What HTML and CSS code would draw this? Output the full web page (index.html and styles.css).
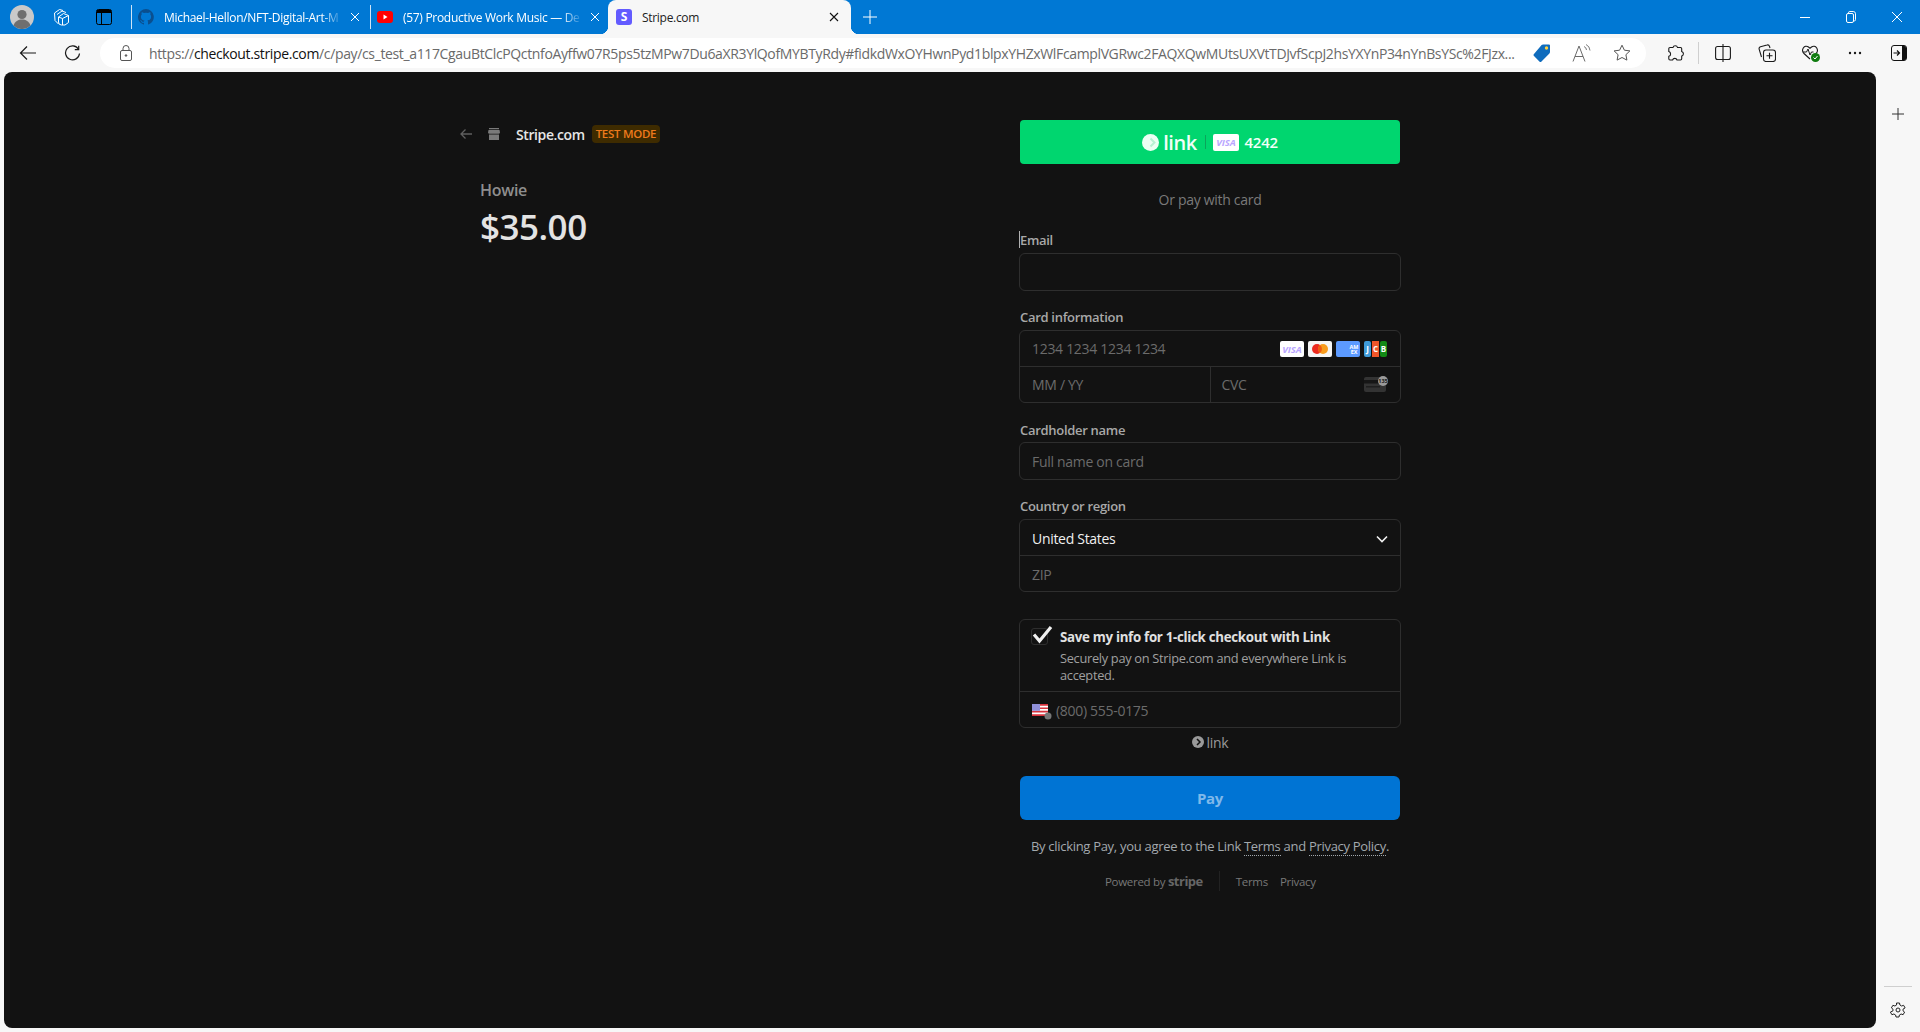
FILE: index.html
```html
<!DOCTYPE html>
<html lang="en">
<head>
<meta charset="utf-8">
<title>Stripe.com</title>
<link rel="stylesheet" href="styles.css">
</head>
<body>
<header class="titlebar">
  <div class="avatar">
    <svg width="24" height="24" viewBox="0 0 24 24"><circle cx="12" cy="12" r="12" fill="#c9c9c9"/><circle cx="12" cy="9.500" r="4.600" fill="#6f6f6f"/><path d="M3.500 20.500c1.400-4.300 4.800-6 8.500-6s7.100 1.700 8.500 6A12 12 0 0 1 3.500 20.500z" fill="#6f6f6f"/></svg>
  </div>
  <div class="tb-btn w40">
    <svg width="18" height="18" viewBox="0 0 18 18" fill="none" stroke="#fff" stroke-width="1"><path d="M1.500 5 6.500 1.500l3.500 1M1.500 5l.5 7.500L5.500 16M4 6.500 9 3l4 1.500"/><path d="M5.500 9 10.500 5.500l5 2v7L12 17H8.500a3 3 0 0 1-3-3z"/><path d="M5.500 9l4 1.500v6.500M9.500 10.500l6-3"/></svg>
  </div>
  <div class="tb-btn w44">
    <svg width="16" height="16" viewBox="0 0 16 16"><rect x="0.500" y="0.500" width="15" height="15" rx="2" fill="#0078d4" stroke="#000"/><path d="M1 1h14v3H1zM5 4h1v11H5z" fill="#000"/></svg>
  </div>
  <div class="tab tab-first">
    <svg class="favicon" viewBox="0 0 16 16"><path fill="#0a4f8f" d="M8 0a8 8 0 0 0-2.500 15.600c.4.100.5-.2.500-.4v-1.400c-2.200.5-2.700-1-2.700-1-.4-.9-.9-1.200-.9-1.200-.7-.5.100-.5.100-.5.800.1 1.200.8 1.200.8.700 1.200 1.900.9 2.300.7.100-.5.300-.9.500-1.100-1.800-.2-3.600-.9-3.600-4 0-.9.300-1.600.8-2.100-.1-.2-.4-1 .1-2.100 0 0 .7-.2 2.200.8a7.600 7.600 0 0 1 4 0c1.500-1 2.200-.8 2.200-.8.400 1.100.2 1.900.1 2.100.5.600.8 1.300.8 2.100 0 3.100-1.900 3.700-3.700 3.900.3.300.6.800.6 1.500v2.200c0 .2.100.5.600.4A8 8 0 0 0 8 0z"/></svg>
    <span class="tab-title fade">Michael-Hellon/NFT-Digital-Art-M</span>
    <svg class="tab-close" viewBox="0 0 12 12" stroke="#fff" stroke-width="1"><path d="M2 2l8 8M10 2l-8 8"/></svg>
  </div>
  <div class="tab tab-second">
    <svg class="favicon" viewBox="0 0 16 16"><rect y="2" width="16" height="12" rx="3" fill="#f00"/><path d="M6.500 5.500v5l4-2.500z" fill="#fff"/></svg>
    <span class="tab-title fade">(57) Productive Work Music — De</span>
    <svg class="tab-close" viewBox="0 0 12 12" stroke="#fff" stroke-width="1"><path d="M2 2l8 8M10 2l-8 8"/></svg>
  </div>
  <div class="tab tab-active">
    <span class="stripe-fav">S</span>
    <span class="tab-title">Stripe.com</span>
    <svg class="tab-close" viewBox="0 0 12 12" stroke="#111" stroke-width="1.100"><path d="M2 2l8 8M10 2l-8 8"/></svg>
  </div>
  <div class="new-tab">
    <svg width="14" height="14" viewBox="0 0 14 14" stroke="#fff" stroke-width="1"><path d="M7 0v14M0 7h14"/></svg>
  </div>
  <div class="window-controls">
    <svg width="46" height="12" viewBox="0 0 46 12" stroke="#fff" stroke-width="1" fill="none"><path d="M18 6.500h10"/></svg>
    <svg width="46" height="12" viewBox="0 0 46 12" stroke="#fff" stroke-width="1" fill="none"><rect x="18.500" y="2.500" width="7" height="9" rx="1.500"/><path d="M20.500 2.500V1.800a1.300 1.300 0 0 1 1.300-1.300h3.400a2.300 2.300 0 0 1 2.300 2.300v5.900a1.300 1.300 0 0 1-1.300 1.300"/></svg>
    <svg width="46" height="12" viewBox="0 0 46 12" stroke="#fff" stroke-width="1" fill="none"><path d="M18 1l10 10M28 1 18 11"/></svg>
  </div>
</header>

<nav class="toolbar">
  <div class="tool first-tool">
    <svg width="18" height="16" viewBox="0 0 18 16" fill="none" stroke="#1a1a1a" stroke-width="1.200"><path d="M17 8H1.500M8 1.500 1.500 8 8 14.500"/></svg>
  </div>
  <div class="tool">
    <svg width="17" height="17" viewBox="0 0 17 17" fill="none" stroke="#1a1a1a" stroke-width="1.200"><path d="M14.500 4.200A7 7 0 1 0 15.500 8.500"/><path d="M14.700 0.800v3.900h-3.900"/></svg>
  </div>
  <div class="address">
    <svg class="lock" width="12" height="16" viewBox="0 0 12 16" fill="none" stroke="#555" stroke-width="1"><rect x="0.500" y="5.500" width="11" height="10" rx="1.500"/><path d="M3 5.500V3.500a3 3 0 0 1 6 0v2"/><circle cx="6" cy="10.500" r="0.800" fill="#555"/></svg>
    <span class="url">https://<b>checkout.stripe.com</b>/c/pay/cs_test_a117CgauBtClcPQctnfoAyffw07R5ps5tzMPw7Du6aXR3YlQofMYBTyRdy#fidkdWxOYHwnPyd1blpxYHZxWlFcamplVGRwc2FAQXQwMUtsUXVtTDJvfScpJ2hsYXYnP34nYnBsYSc%2FJzx...</span>
    <div class="addr-icon">
      <svg width="18" height="20" viewBox="0 0 18 20"><path d="M10 1.500h6a1 1 0 0 1 1 1v6.500a2 2 0 0 1-.6 1.400L8.500 18.500a1.500 1.500 0 0 1-2.100 0L1 13a1.500 1.500 0 0 1 0-2.100L8.600 2.100A2 2 0 0 1 10 1.500z" fill="#0f6cbd"/><circle cx="13.500" cy="5" r="1.700" fill="#ffd23f"/></svg>
    </div>
    <div class="addr-icon">
      <svg width="20" height="18" viewBox="0 0 20 18" fill="none" stroke="#6a6a6a" stroke-width="1"><path d="M1 17.500 7 2l6 15.500M3 12.500h8"/><path d="M12 2.500a4 4 0 0 1 2.500 3.500M14 0.500a7 7 0 0 1 4 6" stroke-width="0.900"/></svg>
    </div>
    <div class="addr-icon">
      <svg width="18" height="18" viewBox="0 0 18 18" fill="none" stroke="#555" stroke-width="1"><path d="M9 1.200l2.400 5 5.500.7-4 3.800 1 5.400L9 13.500l-4.900 2.600 1-5.400-4-3.800 5.500-.7z"/></svg>
    </div>
  </div>
  <div class="tool">
    <svg width="18" height="18" viewBox="0 0 18 18" fill="none" stroke="#1a1a1a" stroke-width="1.100"><path d="M7 3.500a2.300 2.300 0 0 1 4.500 0h3a1.200 1.200 0 0 1 1.200 1.200v2.800a2.400 2.400 0 0 1 0 4.600v2.700a1.200 1.200 0 0 1-1.200 1.200H11a2.300 2.300 0 0 0-4.400 0H4a1.200 1.200 0 0 1-1.200-1.200v-2.500a2.500 2.500 0 0 0 0-4.800V4.700A1.200 1.200 0 0 1 4 3.500z"/></svg>
  </div>
  <div class="tool-sep"></div>
  <div class="tool">
    <svg width="16" height="18" viewBox="0 0 16 18" fill="none" stroke="#1a1a1a" stroke-width="1.100"><rect x="0.600" y="2.500" width="14.800" height="13" rx="2"/><path d="M8 0v18"/></svg>
  </div>
  <div class="tool">
    <svg width="18" height="18" viewBox="0 0 18 18" fill="none" stroke="#1a1a1a" stroke-width="1.100"><path d="M3.500 13 1.200 5.300a2 2 0 0 1 1.300-2.500L9 1a2 2 0 0 1 2.500 1.300L12 4"/><rect x="5.500" y="6" width="12" height="11.500" rx="2.500" fill="#f7f7f7"/><path d="M11.500 8.800v6M8.500 11.800h6"/></svg>
  </div>
  <div class="tool">
    <svg width="20" height="20" viewBox="0 0 20 20"><path d="M9 16 3 10.500C-.5 7 3.500 1 7.500 4L9 5.200 10.500 4c4-3 8 3 4.500 6.500" fill="none" stroke="#1a1a1a" stroke-width="1.100"/><path d="M2 9h3.500l1.500-3 2 6 1.500-3h2" fill="none" stroke="#1a1a1a" stroke-width="1"/><circle cx="14.500" cy="14.500" r="4.500" fill="#107c10"/><path d="M12.500 14.500l1.500 1.500 2.500-3" fill="none" stroke="#fff" stroke-width="1"/></svg>
  </div>
  <div class="tool">
    <svg width="14" height="4" viewBox="0 0 14 4" fill="#1a1a1a"><circle cx="2" cy="2" r="1.200"/><circle cx="7" cy="2" r="1.200"/><circle cx="12" cy="2" r="1.200"/></svg>
  </div>
  <div class="tool">
    <svg width="16" height="16" viewBox="0 0 16 16"><rect x="0.500" y="0.500" width="15" height="15" rx="2.500" fill="#f7f7f7" stroke="#111"/><path d="M11 1h2.500A1.500 1.500 0 0 1 15 2.500v11a1.500 1.500 0 0 1-1.500 1.500H11z" fill="#111"/><path d="M2.500 8H8M6 5.500 8.500 8 6 10.500" fill="none" stroke="#111" stroke-width="1.200"/></svg>
  </div>
</nav>

<div class="workspace">
  <main class="page">
    <section class="summary">
      <div class="merchant">
        <svg class="back-arrow" width="12" height="12" viewBox="0 0 12 12" fill="none" stroke="#5f5f5f" stroke-width="1.300"><path d="M12 6H1M5.500 1.500 1 6l4.500 4.500"/></svg>
        <svg class="store" width="12" height="12" viewBox="0 0 12 12" fill="#7a7a7a"><path d="M1 0h10v1.300H1zM.5 2h11l.5 2.500a1.500 1.500 0 0 1-1.500 1.300h-9A1.500 1.500 0 0 1 0 4.500zM1 6.500h10V12H1z"/></svg>
        <span class="merchant-name">Stripe.com</span>
        <span class="badge">TEST MODE</span>
      </div>
      <div class="product">Howie</div>
      <div class="price">$35.00</div>
    </section>

    <section class="checkout">
      <div class="link-btn">
        <svg width="17" height="17" viewBox="0 0 17 17"><circle cx="8.500" cy="8.500" r="8.500" fill="#eafff3"/><path d="M8.500 4.500 12.500 8.500l-4 4" fill="none" stroke="#b5f2d2" stroke-width="2"/></svg>
        <span class="link-word">link</span>
        <span class="link-sep"></span>
        <svg class="link-visa" width="26" height="17" viewBox="0 0 26 17"><rect width="26" height="17" rx="2" fill="#fff"/><text x="13" y="12" text-anchor="middle" class="visa-text">VISA</text></svg>
        <span class="link-last4">4242</span>
      </div>
      <div class="or-card">Or pay with card</div>

      <div class="field email-field">
        <label class="label label-wide"><span class="caret"></span>Email</label>
        <div class="box"><div class="row"></div></div>
      </div>

      <div class="field card-field">
        <label class="label label-wide">Card information</label>
        <div class="box">
          <div class="row placeholder card-row">
            <span class="grow">1234 1234 1234 1234</span>
            <span class="card-icons">
              <svg width="24" height="16" viewBox="0 0 24 16"><rect width="24" height="16" rx="2" fill="#fff"/><text x="12" y="11.500" text-anchor="middle" class="visa-text">VISA</text></svg>
              <svg width="24" height="16" viewBox="0 0 24 16"><rect width="24" height="16" rx="2" fill="#f5f5f5"/><circle cx="9" cy="8" r="5" fill="#eb2a1f"/><circle cx="15" cy="8" r="5" fill="#f89c1c"/><path d="M12 4a5 5 0 0 1 0 8 5 5 0 0 1 0-8z" fill="#ee5a14"/></svg>
              <svg width="24" height="16" viewBox="0 0 24 16"><rect width="24" height="16" rx="2" fill="#5c9aff"/><text x="18" y="7.500" text-anchor="middle" class="amex-text">AM</text><text x="18" y="13" text-anchor="middle" class="amex-text">EX</text></svg>
              <svg width="23" height="16" viewBox="0 0 23 16"><rect width="7" height="16" rx="2" fill="#3f9bd9"/><rect x="8" width="7" height="16" fill="#f0562a"/><rect x="16" width="7" height="16" rx="2" fill="#128a15"/><text x="3.500" y="11" text-anchor="middle" class="jcb-text">J</text><text x="11.500" y="11" text-anchor="middle" class="jcb-text">C</text><text x="19.500" y="11" text-anchor="middle" class="jcb-text">B</text></svg>
            </span>
          </div>
          <div class="split">
            <div class="row placeholder half">MM / YY</div>
            <div class="row placeholder half half-right">
              <span class="grow">CVC</span>
              <svg class="cvc-icon" width="24" height="16" viewBox="0 0 24 16"><rect y="1" width="22" height="15" rx="2" fill="#333"/><rect y="4" width="22" height="3.500" fill="#161616"/><rect x="2" y="10" width="14" height="1.500" fill="#1f1f1f"/><circle cx="19" cy="5" r="5" fill="#9a9a9a"/><text x="19" y="7" text-anchor="middle" class="cvc-text">135</text></svg>
            </div>
          </div>
        </div>
      </div>

      <div class="field">
        <label class="label">Cardholder name</label>
        <div class="box"><div class="row placeholder">Full name on card</div></div>
      </div>

      <div class="field country-field">
        <label class="label label-wide">Country or region</label>
        <div class="box">
          <div class="row select">
            <span class="grow">United States</span>
            <svg width="12" height="8" viewBox="0 0 12 8" fill="none" stroke="#f0f0f0" stroke-width="1.600"><path d="M1 1.500 6 6.500l5-5"/></svg>
          </div>
          <div class="row placeholder row-line">ZIP</div>
        </div>
      </div>

      <div class="box save-box">
        <div class="save-top">
          <span class="check">
            <svg width="22" height="20" viewBox="0 0 22 20" fill="none" stroke="#f0f0f0" stroke-width="3.200"><path d="M3 10.500 8.500 17 20 3"/></svg>
          </span>
          <div class="save-copy">
            <div class="save-title">Save my info for 1-click checkout with Link</div>
            <div class="save-desc">Securely pay on Stripe.com and everywhere Link is accepted.</div>
          </div>
        </div>
        <div class="row placeholder phone-row">
          <span class="flag">
            <svg width="20" height="16" viewBox="0 0 20 16"><rect width="16" height="12" fill="#fff"/><path d="M0 0h16v1.700H0zM0 3.400h16v1.700H0zM0 6.800h16v1.700H0zM0 10.300h16V12H0z" fill="#d8323c"/><rect width="8" height="6.800" fill="#8f8fd8"/><circle cx="16" cy="12" r="3.500" fill="#777"/></svg>
          </span>
          <span>(800) 555-0175</span>
        </div>
      </div>

      <div class="link-mini">
        <svg width="12" height="12" viewBox="0 0 12 12"><circle cx="6" cy="6" r="6" fill="#9a9a9a"/><path d="M5 3 8 6 5 9" fill="none" stroke="#121212" stroke-width="1.500"/></svg>
        <span>link</span>
      </div>

      <div class="pay-btn">Pay</div>

      <p class="agree">By clicking Pay, you agree to the Link <a class="dotted">Terms</a> and <a class="dotted">Privacy Policy</a>.</p>

      <footer class="powered">
        <span>Powered by <b class="stripe-word">stripe</b></span>
        <span class="foot-sep"></span>
        <span class="foot-links"><span>Terms</span><span>Privacy</span></span>
      </footer>
    </section>
  </main>

  <aside class="rail">
    <svg class="rail-plus" width="12" height="12" viewBox="0 0 12 12" stroke="#333" stroke-width="1"><path d="M6 0v12M0 6h12"/></svg>
    <div class="rail-bottom">
      <div class="rail-sep"></div>
      <svg width="16" height="16" viewBox="0 0 16 16" fill="none" stroke="#222" stroke-width="1"><path d="M6.500 1h3l.4 2 1.700 1 2-.7 1.500 2.600L13 7.200v1.600l1.600 1.300-1.500 2.600-2-.7-1.700 1-.4 2h-3l-.4-2-1.700-1-2 .7-1.500-2.600L3 8.800V7.200L1.400 5.900l1.500-2.600 2 .7 1.700-1z"/><circle cx="8" cy="8" r="2"/></svg>
    </div>
  </aside>
</div>
</body>
</html>
```
FILE: styles.css
```css
* { box-sizing: border-box; }

html, body {
  margin: 0;
  height: 1032px;
  overflow: hidden;
}

body {
  display: flex;
  flex-direction: column;
  background: #f7f7f7;
  font-family: "Open Sans", "Noto Sans", sans-serif;
  font-size: 14px;
  letter-spacing: -0.3px;
}

svg { display: block; flex: none; }

/* Browser title bar */
.titlebar {
  display: flex;
  align-items: center;
  height: 34px;
  background: #0078d4;
  color: #fff;
  flex: none;
}

.avatar { width: 42px; padding-left: 10px; }
.tb-btn { display: flex; justify-content: center; }
.w40 { width: 40px; }
.w44 { width: 44px; margin-right: 5px; }

.tab {
  display: flex;
  align-items: center;
  height: 34px;
  position: relative;
  font-size: 12px;
}

.tab-first { width: 239px; padding: 0 7px; }
.tab-second { width: 238px; padding: 0 5px 0 7px; }
.tab-first::before, .tab-second::before {
  content: "";
  position: absolute;
  left: 0;
  top: 5px;
  bottom: 5px;
  border-left: 1px solid #cfe4f6;
}

.favicon { width: 16px; height: 16px; }
.tab-title { flex: 1; min-width: 0; margin-left: 10px; white-space: nowrap; }
.fade { -webkit-mask-image: linear-gradient(to right, #000 88%, transparent 100%); mask-image: linear-gradient(to right, #000 88%, transparent 100%); }
.tab-close { width: 12px; height: 12px; margin: 0 2px 0 6px; }

.tab-active {
  width: 243px;
  padding: 0 9px 0 8px;
  background: #f7f7f7;
  color: #222;
  border-radius: 8px 8px 0 0;
}

.tab-active::before, .tab-active::after {
  content: "";
  position: absolute;
  bottom: 0;
  width: 8px;
  height: 8px;
}

.tab-active::before { left: -8px; background: radial-gradient(circle at 0 0, transparent 8px, #f7f7f7 8.500px); }
.tab-active::after { right: -8px; background: radial-gradient(circle at 100% 0, transparent 8px, #f7f7f7 8.500px); }

.stripe-fav {
  width: 16px;
  height: 16px;
  flex: none;
  border-radius: 3px;
  background: #635bff;
  color: #fff;
  font-weight: 700;
  font-size: 12px;
  line-height: 16px;
  text-align: center;
}

.new-tab { margin-left: 12px; }
.window-controls { display: flex; margin-left: auto; }

/* Browser toolbar */
.toolbar {
  display: flex;
  align-items: center;
  height: 38px;
  flex: none;
  background: #f7f7f7;
}

.tool { width: 44px; height: 30px; display: flex; align-items: center; justify-content: center; flex: none; }
.first-tool { margin-left: 6px; }
.tool-sep { width: 1px; height: 22px; margin: 0 2px 0 1px; background: #cfcfcf; flex: none; }

.address {
  display: flex;
  align-items: center;
  width: 1546px;
  height: 30px;
  margin: 0 7px 0 6px;
  padding: 0 4px 0 20px;
  flex: none;
  background: #fff;
  border-radius: 15px;
}

.url {
  flex: 1;
  min-width: 0;
  margin-left: 17px;
  white-space: nowrap;
  overflow: hidden;
  font-size: 14px;
  letter-spacing: -0.36px;
  color: #6a6a6a;
}

.url b { font-weight: 400; color: #111; }
.addr-icon { width: 40px; display: flex; justify-content: center; flex: none; }

/* Main area */
.workspace { display: flex; flex: 1; min-height: 0; }

.page {
  flex: 1;
  display: flex;
  margin: 0 0 4px 4px;
  padding: 48px 0 0 456px;
  background: #121212;
  border-radius: 8px;
  color: #e6e6e6;
}

.rail {
  width: 44px;
  flex: none;
  display: flex;
  flex-direction: column;
  align-items: center;
  padding: 36px 0 14px;
}

.rail-plus { flex: none; }
.rail-bottom { margin-top: auto; width: 100%; display: flex; flex-direction: column; align-items: center; }
.rail-sep { width: 28px; border-top: 1px solid #cfcfcf; margin-bottom: 15px; }

/* Order summary */
.summary { width: 559px; padding-top: 5px; flex: none; }

.merchant { display: flex; align-items: center; height: 18px; }
.back-arrow { margin-right: 16px; }
.store { margin-right: 16px; }
.merchant-name { font-weight: 600; letter-spacing: -0.4px; color: #e6e6e6; margin-right: 7px; }

.badge {
  height: 18px;
  padding: 0 4px;
  border-radius: 4px;
  background: #3e2b00;
  color: #ee7a1c;
  font-size: 11.500px;
  font-weight: 600;
  line-height: 18px;
}

.product {
  margin: 37px 0 0 20px;
  font-size: 16px;
  font-weight: 600;
  line-height: 20px;
  color: #8e8e8e;
}

.price {
  margin: 5px 0 0 20px;
  font-size: 35px;
  font-weight: 600;
  line-height: 44px;
  letter-spacing: -0.5px;
  color: #e3e3e3;
}

/* Checkout form */
.checkout { width: 382px; flex: none; }

.link-btn {
  display: flex;
  align-items: center;
  justify-content: center;
  height: 44px;
  margin: 0 1px;
  background: #00d66f;
  border-radius: 4px;
  color: #f1fff8;
}

.link-word { margin-left: 4px; font-size: 20px; font-weight: 600; letter-spacing: -0.5px; }
.link-sep { width: 1px; height: 14px; margin: 0 7px 0 8px; background: #0aa55b; }
.link-last4 { margin-left: 6px; font-size: 15px; font-weight: 600; }
.visa-text { font: italic 700 9.500px "Open Sans", sans-serif; fill: #b9a6ff; letter-spacing: 0; }
.amex-text { font: 700 5.500px "Open Sans", sans-serif; fill: #fff; letter-spacing: 0; }
.jcb-text { font: 700 8px "Open Sans", sans-serif; fill: #fff; letter-spacing: 0; }
.cvc-text { font: 700 5.500px "Open Sans", sans-serif; fill: #1a1a1a; letter-spacing: 0; }

.or-card {
  margin-top: 26px;
  text-align: center;
  line-height: 20px;
  color: #7a7a7a;
}

.field { margin-top: 19px; }
.email-field { margin-top: 22px; }
.card-field, .country-field { margin-top: 18px; }

.label {
  display: block;
  position: relative;
  margin: 0 0 4px 1px;
  font-size: 13px;
  font-weight: 600;
  line-height: 16px;
  color: #a8a8a8;
}

.label-wide { margin-bottom: 5px; }

.caret {
  position: absolute;
  left: -1px;
  top: -1px;
  height: 17px;
  border-left: 1px solid #b0b0b0;
}

.box { border: 1px solid #2e2e2e; border-radius: 6px; }

.row {
  display: flex;
  align-items: center;
  height: 36px;
  padding: 0 12px;
}

.placeholder { color: #6b6b6b; }
.grow { flex: 1; min-width: 0; }
.card-row { height: 35px; padding-right: 13px; }
.card-icons { display: flex; gap: 4px; }

.split { display: flex; border-top: 1px solid #2e2e2e; }
.half { flex: 1; height: 35px; }
.half-right { border-left: 1px solid #2e2e2e; padding: 0 13px 0 11px; }
.cvc-icon { align-self: flex-start; margin-top: 9px; margin-right: -1px; }

.select { height: 35px; padding-top: 2px; color: #f0f0f0; padding-right: 12px; }
.row-line { border-top: 1px solid #2e2e2e; padding-top: 2px; }

.save-box { margin-top: 27px; }
.save-top { display: flex; height: 72px; padding: 8px 11px 0; border-bottom: 1px solid #2e2e2e; }

.check {
  position: relative;
  width: 17px;
  height: 17px;
  margin-right: 12px;
  flex: none;
  border: 1px solid #2e2e2e;
  border-radius: 3px;
}

.check svg { position: absolute; left: -1px; top: -5px; }

.save-copy { margin-top: -1px; }
.save-title { font-size: 13.300px; font-weight: 700; line-height: 20px; color: #e0e0e0; }
.save-desc { margin-top: 3px; font-size: 12.800px; line-height: 17px; color: #a0a0a0; }

.phone-row { height: 35px; padding-top: 2px; }
.flag { width: 24px; flex: none; padding-top: 3px; }

.link-mini {
  display: flex;
  align-items: center;
  justify-content: center;
  gap: 3px;
  height: 16px;
  margin-top: 6px;
  font-weight: 500;
  color: #9a9a9a;
}

.pay-btn {
  height: 44px;
  margin: 26px 1px 0;
  background: #0074d4;
  border-radius: 6px;
  color: #7fb9ea;
  font-size: 15px;
  font-weight: 700;
  line-height: 44px;
  text-align: center;
}

.agree {
  margin: 18px 0 0;
  font-size: 13px;
  line-height: 16px;
  text-align: center;
  color: #a3a9ae;
}

.dotted { border-bottom: 1px dotted #a3a9ae; }

.powered {
  display: flex;
  align-items: center;
  height: 16px;
  margin: 19px 0 0 86px;
  font-size: 11.500px;
  color: #787878;
}

.stripe-word { font-size: 13px; font-weight: 700; color: #666; letter-spacing: -0.5px; }
.foot-sep { height: 20px; margin: 0 16px; border-left: 1px solid #222; }
.foot-links { display: flex; gap: 12px; }
```
